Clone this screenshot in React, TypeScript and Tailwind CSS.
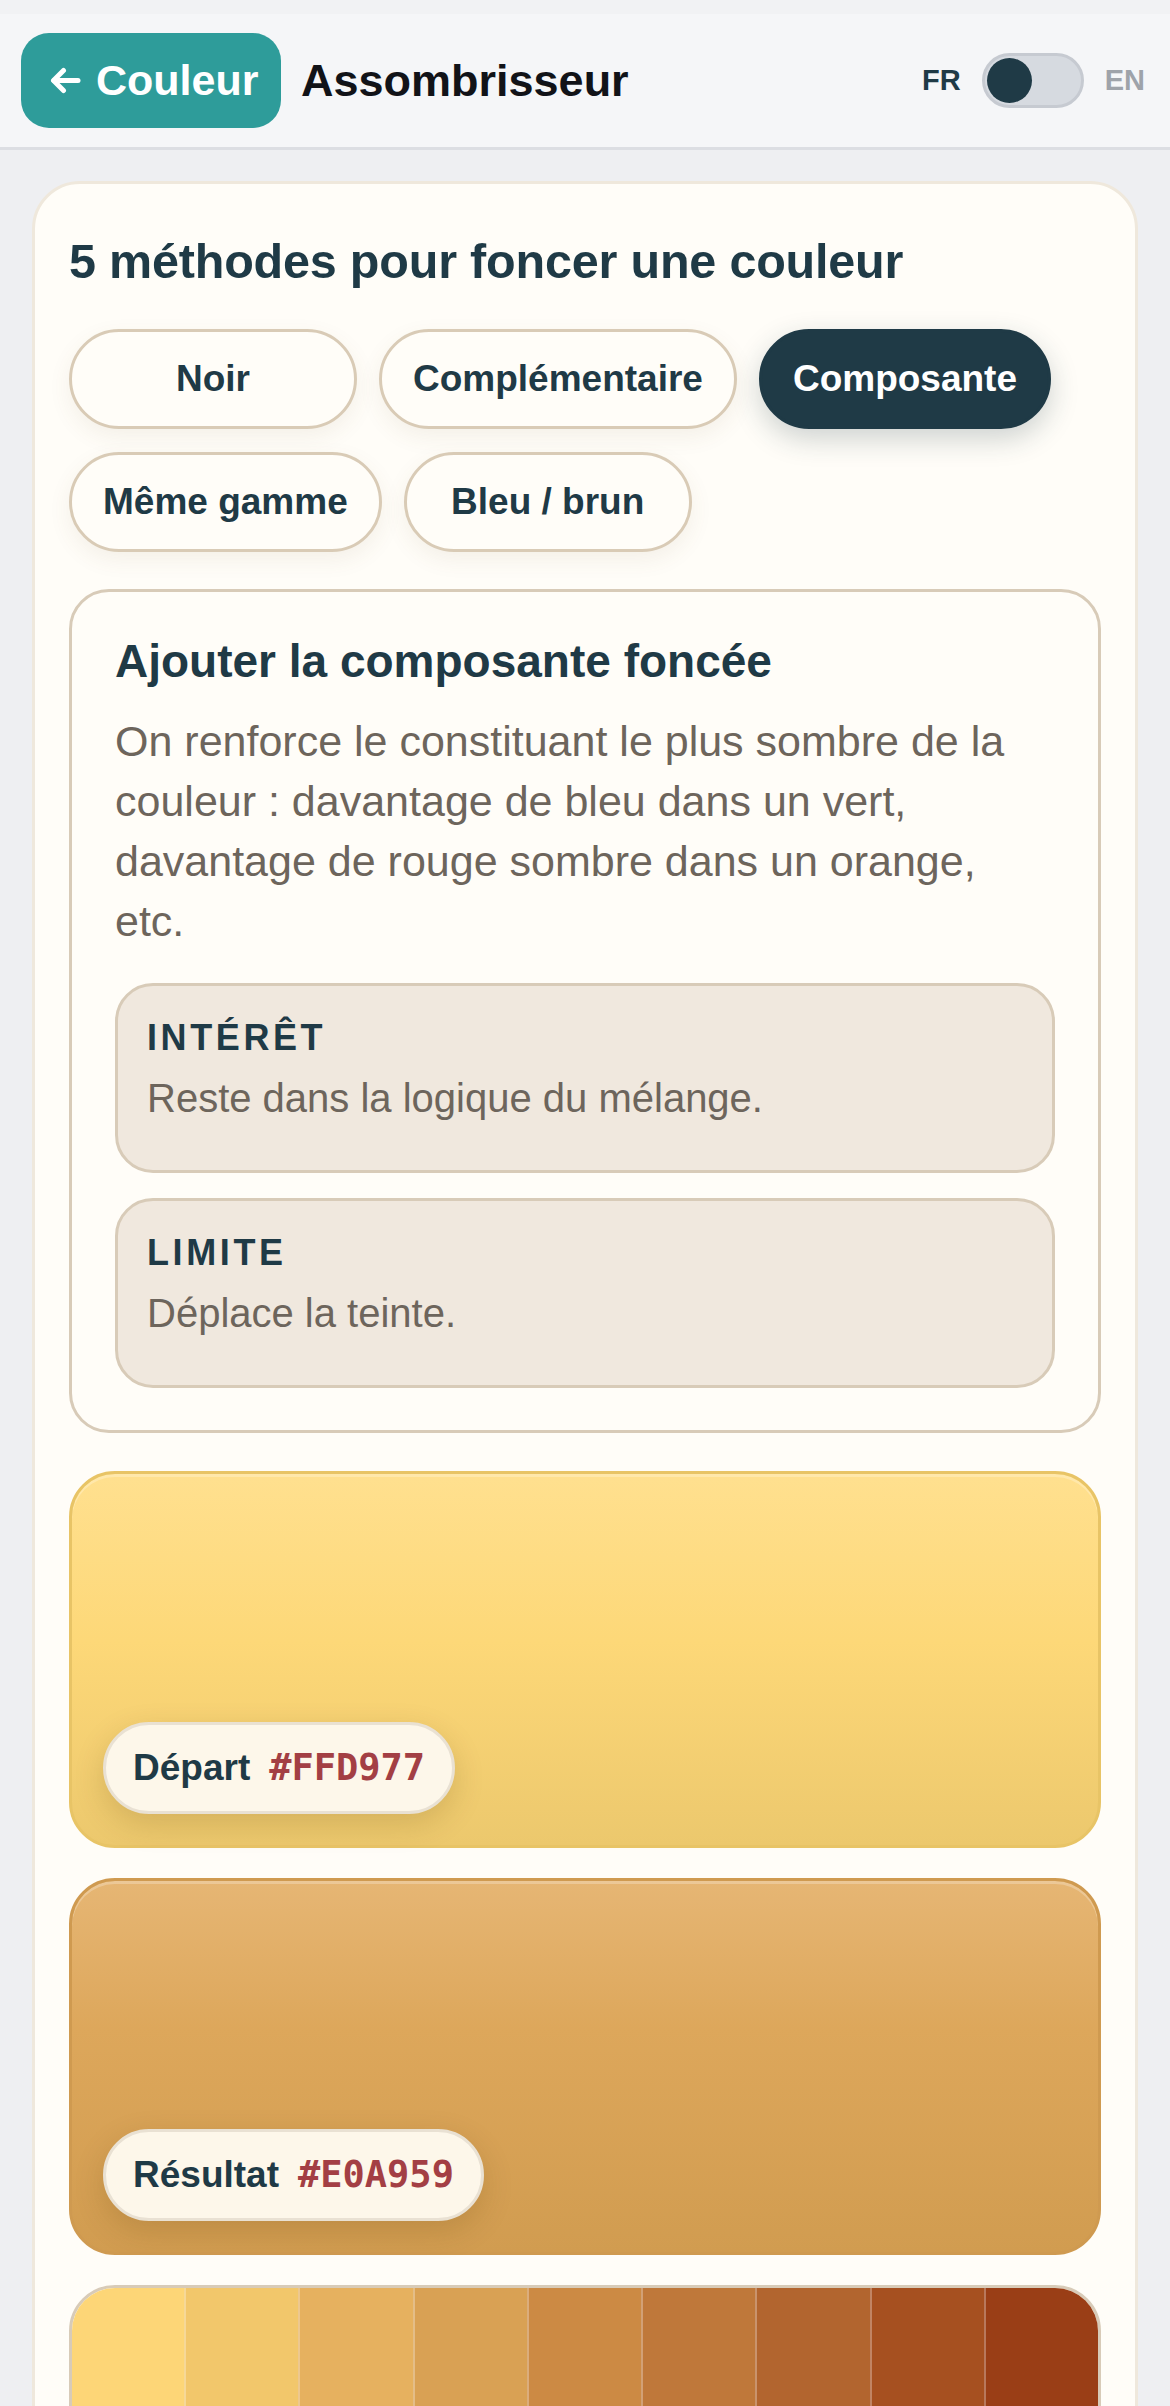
import { useState } from 'react'

const METHODS = ['Noir', 'Complémentaire', 'Composante', 'Même gamme', 'Bleu / brun']

const PALETTE = [
  '#fdd677',
  '#f2c76b',
  '#e6b15f',
  '#d9a154',
  '#cc8a44',
  '#bf783a',
  '#b2652f',
  '#a65020',
  '#9a3e16',
]

function ArrowLeft() {
  return (
    <svg width="31" height="27" viewBox="0 0 31 27" fill="none" stroke="currentColor" strokeWidth="5" strokeLinecap="round" strokeLinejoin="round">
      <path d="M28 13.5H4" />
      <path d="M13.5 3.5L3.5 13.5L13.5 23.5" />
    </svg>
  )
}

function Header() {
  const [lang, setLang] = useState<'fr' | 'en'>('fr')
  return (
    <header className="border-t-[14px] border-t-[#f1f2f4] border-b-[3px] border-b-[#dcdee3] bg-[#f5f6f8] h-[150px] flex items-center pl-[21px] pr-[25px]">
      <button className="h-[95px] w-[260px] rounded-[28px] bg-[#2e9c9a] text-white flex items-center gap-[15px] pl-[29px] text-[43px] font-bold">
        <ArrowLeft />
        <span>Couleur</span>
      </button>
      <h1 className="ml-[20px] text-[45px] font-bold text-[#111318]">Assombrisseur</h1>
      <div className="ml-auto flex items-center gap-[21px] text-[29px] font-bold">
        <span className={lang === 'fr' ? 'text-[#1f3a46]' : 'text-[#9ea3aa]'}>FR</span>
        <button
          onClick={() => setLang(lang === 'fr' ? 'en' : 'fr')}
          className={`w-[102px] h-[55px] rounded-full bg-[#d6dae0] border-[3px] border-[#c6cad1] flex items-center px-[2px] ${lang === 'fr' ? 'justify-start' : 'justify-end'}`}
        >
          <span className="w-[45px] h-[45px] rounded-full bg-[#1f3a46]" />
        </button>
        <span className={lang === 'en' ? 'text-[#1f3a46]' : 'text-[#9ea3aa]'}>EN</span>
      </div>
    </header>
  )
}

function InfoBox({ label, text }: { label: string; text: string }) {
  return (
    <div className="rounded-[38px] border-[3px] border-[#d8cbb8] bg-[#f0e8de] pl-[29px] pr-[29px] pt-[30px] pb-[44px]">
      <div className="text-[36px] leading-[43px] font-bold tracking-[0.1em] text-[#1f3a46]">{label}</div>
      <p className="mt-[11px] text-[40px] leading-[56px] text-[#6d655c]">{text}</p>
    </div>
  )
}

function Swatch({ label, hex, gradient, border }: { label: string; hex: string; gradient: string; border: string }) {
  return (
    <div
      className={`relative h-[377px] rounded-[46px] border-[3px] ${border} ${gradient} shadow-[inset_0_3px_0_rgba(255,255,255,0.25)]`}
    >
      <div className="absolute left-[31px] bottom-[31px] h-[92px] rounded-full border-[3px] border-[#e9e1d3] bg-[#fdf7ea] pl-[27px] pr-[27px] flex items-center gap-[19px] shadow-[0_10px_30px_rgba(90,60,10,0.18)]">
        <span className="text-[37px] font-bold text-[#1f3a46]">{label}</span>
        <span className="text-[37px] font-bold text-[#a33f44] font-['DejaVu_Sans_Mono','Liberation_Mono',monospace]">{hex}</span>
      </div>
    </div>
  )
}

export default function App() {
  const [active, setActive] = useState('Composante')

  return (
    <div className="min-h-screen bg-[#eeeff2] font-['Liberation_Sans',Arial,sans-serif]">
      <Header />
      <main className="px-[32px] pt-[31px] pb-[40px]">
        <section className="rounded-[48px] border-[3px] border-[#efe8dc] bg-[#fffdf8] px-[34px] pt-[48px] pb-[40px]">
          <h2 className="text-[48.5px] leading-[58px] font-bold text-[#1f3a46] tracking-[-0.004em]">
            5 méthodes pour foncer une couleur
          </h2>

          <div className="mt-[39px] flex flex-wrap gap-x-[22px] gap-y-[23px]">
            {METHODS.map((m) => (
              <button
                key={m}
                onClick={() => setActive(m)}
                className={
                  m === active
                    ? 'h-[100px] min-w-[288px] px-[31px] rounded-full border-[3px] border-[#1f3a46] bg-[#1f3a46] text-white text-[37px] font-bold shadow-[0_10px_28px_rgba(31,58,70,0.22)]'
                    : 'h-[100px] min-w-[288px] px-[31px] rounded-full border-[3px] border-[#d9cbb6] bg-[#fffdf8] text-[#1f3a46] text-[37px] font-bold shadow-[0_8px_22px_rgba(120,90,50,0.08)]'
                }
              >
                {m}
              </button>
            ))}
          </div>

          <div className="mt-[37px] rounded-[40px] border-[3px] border-[#d8cbb8] bg-[#fffdf8] pl-[43px] pr-[43px] pt-[42px] pb-[42px]">
            <h3 className="text-[46px] leading-[55px] font-bold text-[#1f3a46]">Ajouter la composante foncée</h3>
            <p className="mt-[22px] text-[43px] leading-[60px] text-[#6d655c]">
              On renforce le constituant le plus sombre de la couleur&nbsp;: davantage de bleu dans un vert, davantage de rouge sombre dans un orange, etc.
            </p>
            <div className="mt-[32px] flex flex-col gap-[25px]">
              <InfoBox label="INTÉRÊT" text="Reste dans la logique du mélange." />
              <InfoBox label="LIMITE" text="Déplace la teinte." />
            </div>
          </div>

          <div className="mt-[38px] flex flex-col gap-[30px]">
            <Swatch
              label="Départ"
              hex="#FFD977"
              border="border-[#e8c466]"
              gradient="bg-[linear-gradient(to_bottom,#ffe08f,#fdd878_45%,#ecc86d)]"
            />
            <Swatch
              label="Résultat"
              hex="#E0A959"
              border="border-[#cf9a50]"
              gradient="bg-[linear-gradient(to_bottom,#e6b674,#dda75b_40%,#d19c50)]"
            />
            <div className="h-[200px] rounded-[46px] border-[3px] border-[#d8cbb8] overflow-hidden flex">
              {PALETTE.map((c, i) => (
                <div
                  key={c}
                  className={i === 0 ? 'flex-1' : 'flex-1 border-l-2 border-l-[rgba(255,255,255,0.3)]'}
                  style={{ backgroundColor: c }}
                />
              ))}
            </div>
          </div>
        </section>
      </main>
    </div>
  )
}
